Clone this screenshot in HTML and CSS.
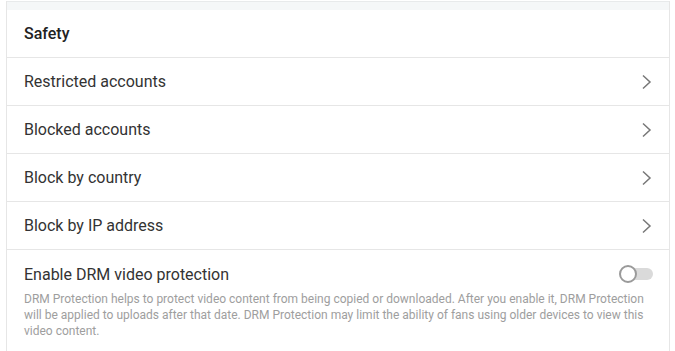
FILE: index.html
```html
<!DOCTYPE html>
<html lang="en">
<head>
    <meta charset="UTF-8">
    <meta name="viewport" content="width=device-width, initial-scale=1.0">
    <title>Safety settings</title>
    <link rel="stylesheet" href="styles.css">
</head>
<body>
    <div class="panel">
        <div class="panel-top"></div>

        <div class="panel-head">Safety</div>

        <a class="row" href="#">
            <span>Restricted accounts</span>
            <svg class="chevron" viewBox="0 0 12 16"><path d="M2 1.5 L9 8 L2 14.5" /></svg>
        </a>
        <a class="row" href="#">
            <span>Blocked accounts</span>
            <svg class="chevron" viewBox="0 0 12 16"><path d="M2 1.5 L9 8 L2 14.5" /></svg>
        </a>
        <a class="row" href="#">
            <span>Block by country</span>
            <svg class="chevron" viewBox="0 0 12 16"><path d="M2 1.5 L9 8 L2 14.5" /></svg>
        </a>
        <a class="row" href="#">
            <span>Block by IP address</span>
            <svg class="chevron" viewBox="0 0 12 16"><path d="M2 1.5 L9 8 L2 14.5" /></svg>
        </a>

        <div class="option">
            <div class="option-line">
                <span>Enable DRM video protection</span>
                <label class="toggle">
                    <input type="checkbox">
                    <span class="track"></span>
                    <span class="knob"></span>
                </label>
            </div>
            <p class="option-note">DRM Protection helps to protect video content from being copied or downloaded. After you enable it, DRM Protection will be applied to uploads after that date. DRM Protection may limit the ability of fans using older devices to view this video content.</p>
        </div>
    </div>
</body>
</html>
```

FILE: styles.css
```css
body {
    margin: 0;
    padding: 0;
    background: #fff;
    font-family: Roboto, "Noto Sans", Arial, sans-serif;
    color: #333;
}

.panel {
    margin: 0 5px 0 6px;
    border-left: 1px solid #e6e6e6;
    border-right: 1px solid #e6e6e6;
    min-height: 351px;
    box-sizing: border-box;
}

.panel-top {
    height: 8px;
    margin-top: 1px;
    border-top: 1px solid #e8eaeb;
    background: #f5f7f8;
}

.panel-head {
    height: 47px;
    display: flex;
    align-items: center;
    padding: 0 17px;
    font-size: 16px;
    font-weight: 500;
    color: #222;
    border-bottom: 1px solid #e6e6e6;
}

.row {
    height: 47px;
    display: flex;
    align-items: center;
    justify-content: space-between;
    padding: 0 16px 0 17px;
    font-size: 16px;
    color: #333;
    text-decoration: none;
    border-bottom: 1px solid #e6e6e6;
}

.chevron {
    width: 12px;
    height: 16px;
    fill: none;
    stroke: #777;
    stroke-width: 1.5;
}

.option {
    padding: 13px 16px 0 17px;
}

.option-line {
    display: flex;
    align-items: center;
    justify-content: space-between;
    font-size: 16px;
    color: #333;
    height: 22px;
}

.option-note {
    margin: 6px 0 0;
    font-size: 12px;
    line-height: 16px;
    color: #9e9e9e;
}

.toggle {
    position: relative;
    width: 34px;
    height: 18px;
}

.toggle input {
    display: none;
}

.track {
    position: absolute;
    left: 6px;
    right: 0;
    top: 3px;
    height: 12px;
    border-radius: 6px;
    background: #dadada;
}

.knob {
    position: absolute;
    left: 0;
    top: 0;
    width: 14px;
    height: 14px;
    border-radius: 50%;
    background: #fff;
    border: 2px solid #9a9a9a;
}
```
